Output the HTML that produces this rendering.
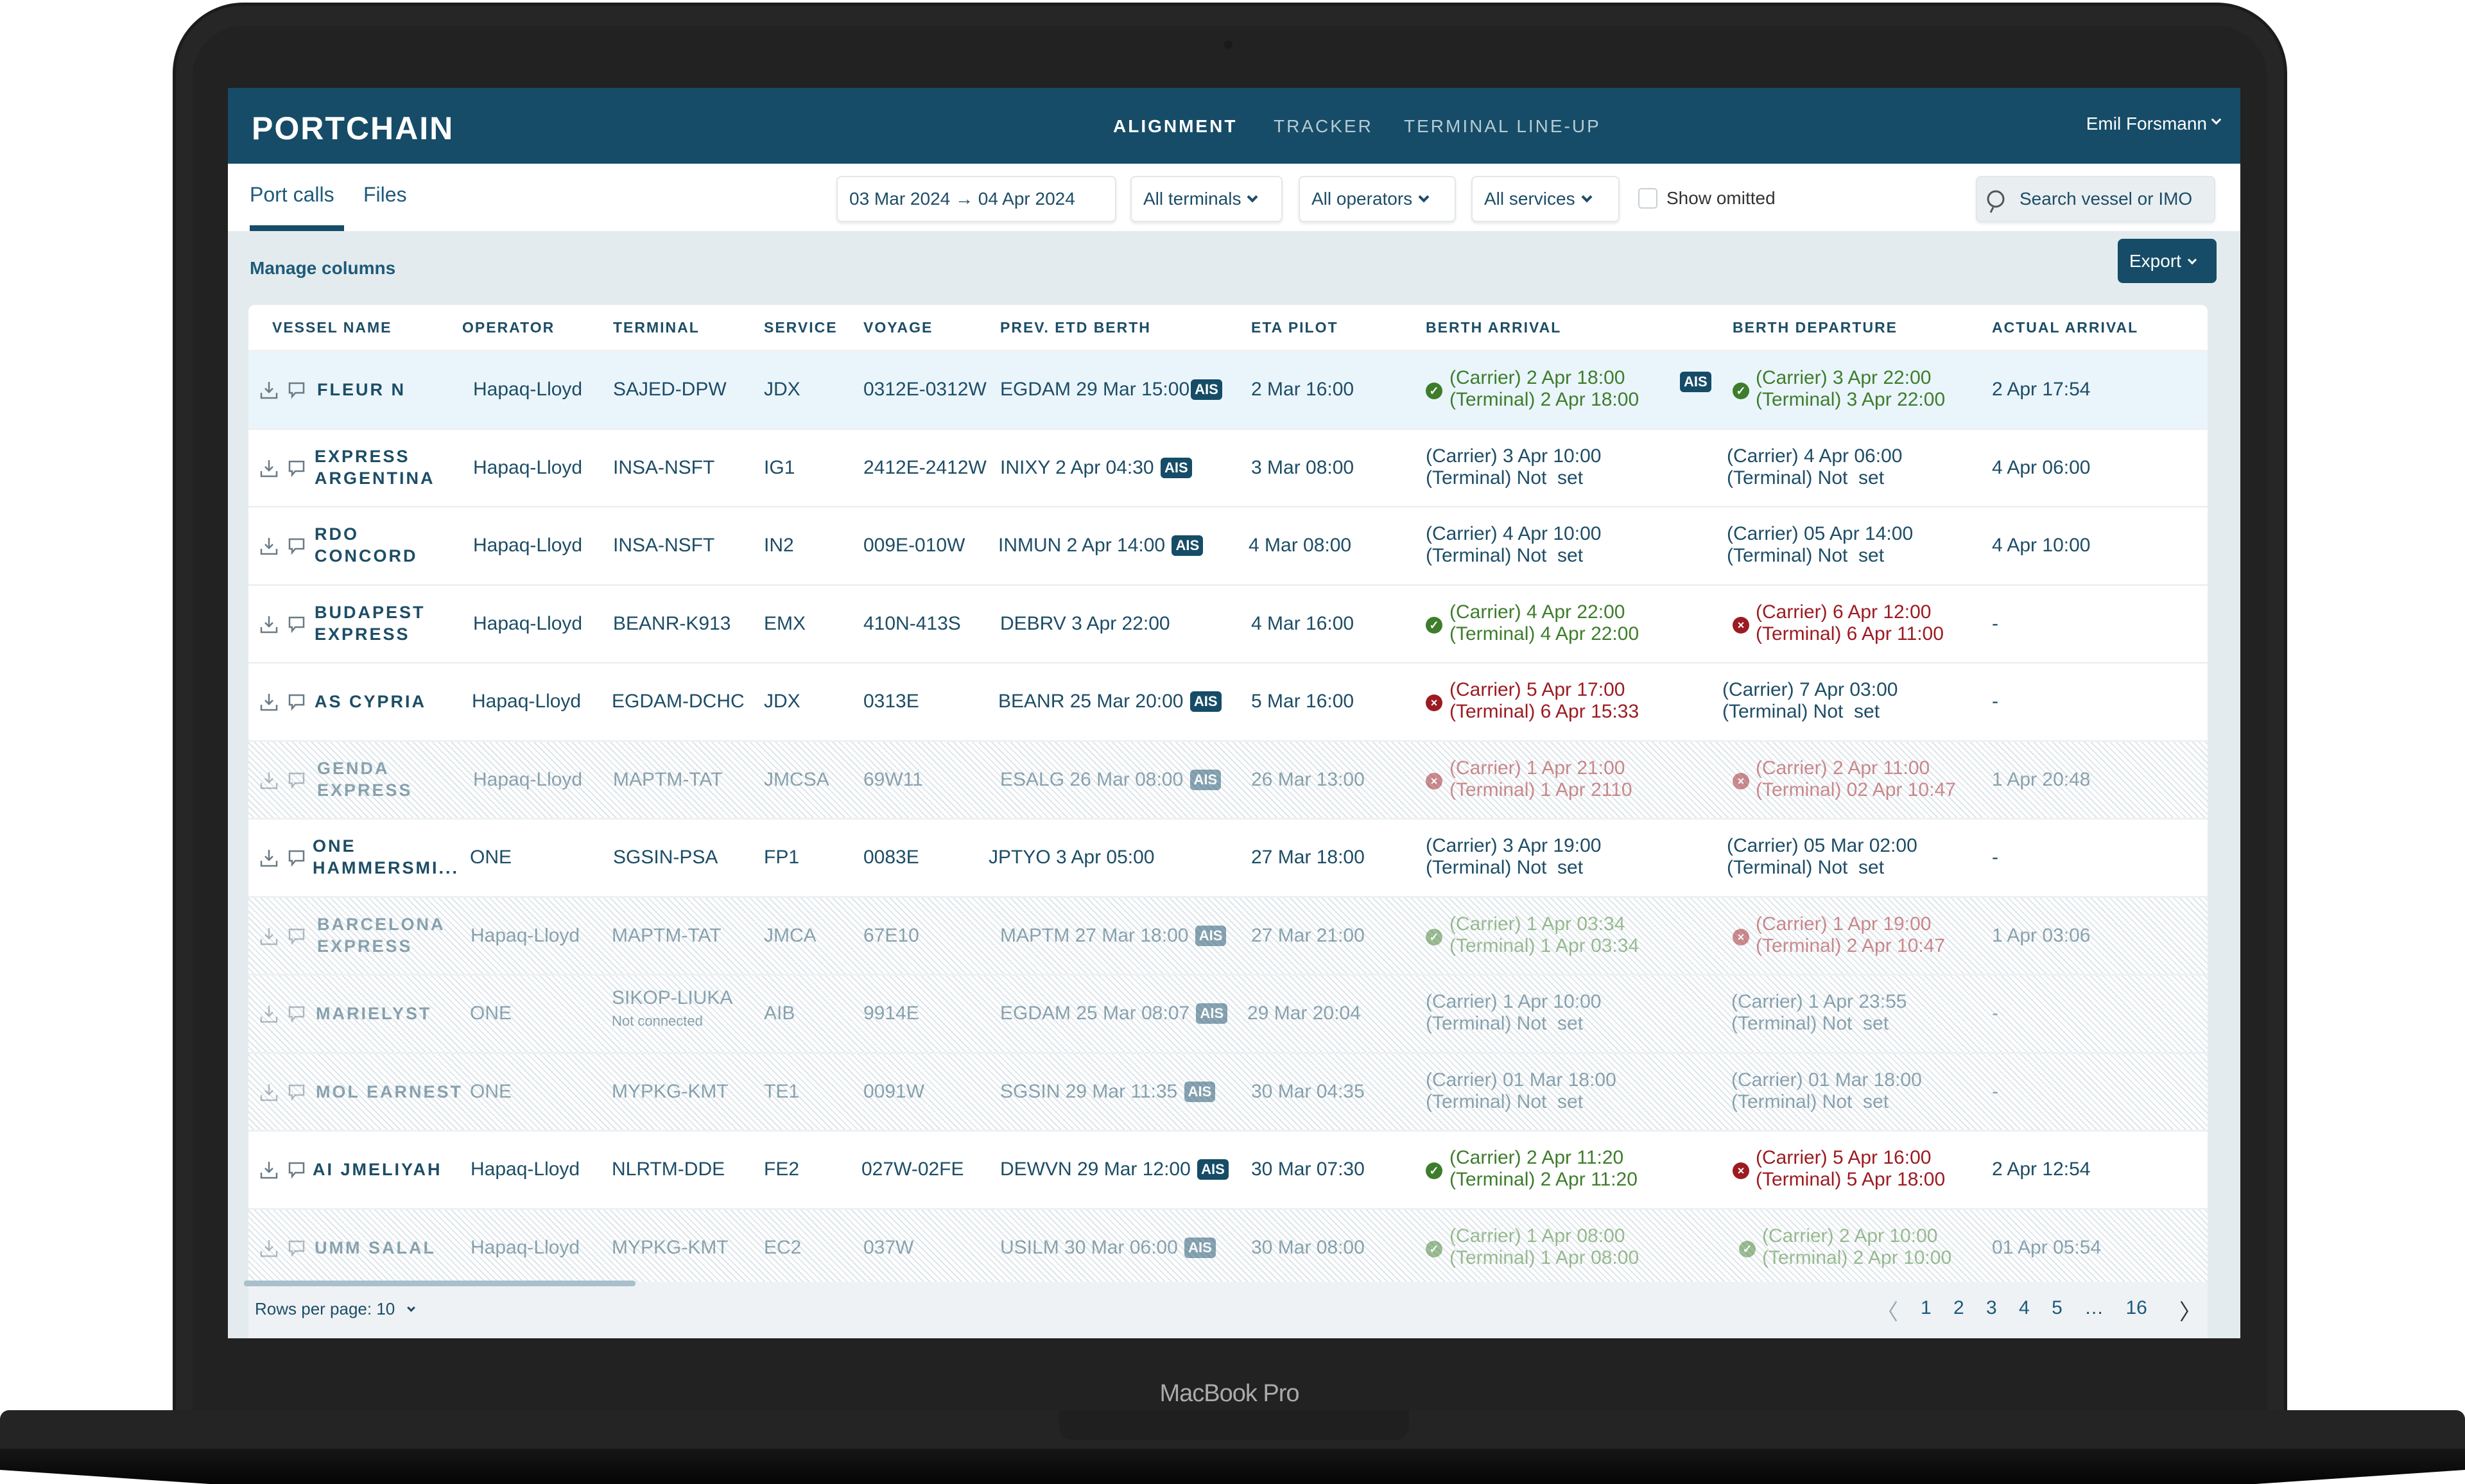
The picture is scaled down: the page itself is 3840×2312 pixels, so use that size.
<!DOCTYPE html>
<html><head><meta charset="utf-8"><style>
*{margin:0;padding:0;box-sizing:border-box}
body{width:3840px;height:2312px;background:#fff;position:relative;overflow:hidden;font-family:"Liberation Sans",sans-serif;color:#1d4d66}
.abs{position:absolute}
#lid{left:269px;top:4px;width:3294px;height:2200px;background:#262626;border-radius:110px 110px 0 0;border:5px solid #1c1c1c}
#bezel{left:300px;top:40px;width:3232px;height:2160px;background:#222;border-radius:80px 80px 0 0}
#screen{left:355px;top:137px;width:3135px;height:1948px;background:#e4ebee;overflow:hidden}
#hdr{left:0;top:0;width:3135px;height:118px;background:#164c67}
.logo{left:37px;top:34px;font-size:50px;color:#fff;letter-spacing:2px;font-weight:bold}
.nav{top:44px;font-size:28px;letter-spacing:3px;color:#b6cbd6}
#fbar{left:0;top:118px;width:3135px;height:105px;background:#fff}
.tab{top:30px;font-size:32px;color:#1d5a7a}
.sel{top:137px;height:72px;border:2px solid #e2e7ea;border-radius:8px;background:#fff;font-size:28px;line-height:68px;padding-left:18px;color:#1d4d66;box-shadow:0 3px 4px rgba(0,0,0,.08)}
.chev{display:inline-block;width:12px;height:12px;border-right:4px solid #1d4d66;border-bottom:4px solid #1d4d66;transform:rotate(45deg);margin-left:12px;position:relative;top:-6px}
#card{left:32px;top:338px;width:3052px;height:1660px;background:#fff;border-radius:10px 10px 0 0;overflow:hidden}
.th{top:0;height:70px;line-height:70px;font-size:23px;font-weight:bold;letter-spacing:2px;color:#1d4d66}
.r{position:absolute;left:0;width:3052px;height:121.5px;border-top:3px solid #eef1f3;background:#fff}
.r.hl{background:#eaf5fb}
.r.f{background:repeating-linear-gradient(45deg,#fff 0 5px,#dde5ea 5px 7px)}
.r.f .in{opacity:.5}
.in{position:absolute;left:0;top:0;width:100%;height:100%}
.c{position:absolute;top:0;line-height:118px;font-size:30px;white-space:nowrap}
.c2{position:absolute;top:24px;line-height:34px;font-size:30px;white-space:nowrap}
.vn{font-weight:bold;letter-spacing:3px;font-size:27px}
.ais{display:inline-block;background:#164c67;color:#fff;font-size:22px;font-weight:bold;height:32px;line-height:32px;padding:0 6px;border-radius:6px;vertical-align:2px;margin-left:2px}
.g{color:#3e7d2c}.rd{color:#9c1b22}
.ok,.no{position:absolute;top:48px;width:26px;height:26px;border-radius:50%;color:#fff;font-size:18px;line-height:26px;text-align:center;font-weight:bold}
.ok{background:#3e7d2c}.no{background:#9c1b22}
.ic{position:absolute;top:45px}
</style></head><body>
<div id="lid" class="abs"></div>
<div id="bezel" class="abs"></div>
<div class="abs" style="left:1907px;top:63px;width:13px;height:13px;border-radius:50%;background:#1a1a1a"></div>
<div id="screen" class="abs">
 <div id="hdr" class="abs">
  <div class="abs logo">PORTCHAIN</div>
  <div class="abs nav" style="left:1379px;color:#fff;font-weight:bold">ALIGNMENT</div>
  <div class="abs nav" style="left:1629px">TRACKER</div>
  <div class="abs nav" style="left:1832px">TERMINAL LINE-UP</div>
  <div class="abs" style="right:52px;top:40px;font-size:28px;color:#fff">Emil Forsmann</div>
  <div class="abs" style="right:32px;top:44px;width:11px;height:11px;border-right:3px solid #fff;border-bottom:3px solid #fff;transform:rotate(45deg)"></div>
 </div>
 <div id="fbar" class="abs">
  <div class="abs tab" style="left:34px">Port calls</div>
  <div class="abs tab" style="left:211px">Files</div>
  <div class="abs" style="left:34px;top:96px;width:147px;height:9px;background:#164c67"></div>
 </div>
 <div class="abs sel" style="left:948px;width:436px">03 Mar 2024 → 04 Apr 2024</div>
 <div class="abs sel" style="left:1406px;width:237px">All terminals<span class="chev"></span></div>
 <div class="abs sel" style="left:1668px;width:245px">All operators<span class="chev"></span></div>
 <div class="abs sel" style="left:1937px;width:231px">All services<span class="chev"></span></div>
 <div class="abs" style="left:2197px;top:156px;width:30px;height:32px;border:2px solid #c8d0d5;border-radius:5px;background:#fff"></div>
 <div class="abs" style="left:2241px;top:156px;font-size:28px;color:#333">Show omitted</div>
 <div class="abs sel" style="left:2723px;width:373px;background:#e9eef1;padding-left:66px">Search vessel or IMO</div>
 <svg class="abs" style="left:2736px;top:156px" width="40" height="40" viewBox="0 0 40 40" fill="none" stroke="#555" stroke-width="3"><circle cx="18" cy="17" r="12"/><path d="M14 30l-4 8"/></svg>
 <div class="abs" style="left:34px;top:265px;font-size:28px;font-weight:bold;color:#1d5a7a">Manage columns</div>
 <div class="abs" style="left:2944px;top:235px;width:154px;height:69px;background:#164c67;border-radius:8px;color:#fff;font-size:28px;line-height:69px;padding-left:18px">Export<span class="chev" style="border-color:#fff;width:10px;height:10px;border-width:0 3px 3px 0"></span></div>
 <div id="card" class="abs">
  <div class="th abs" style="left:37px">VESSEL NAME</div>
  <div class="th abs" style="left:333px">OPERATOR</div>
  <div class="th abs" style="left:568px">TERMINAL</div>
  <div class="th abs" style="left:803px">SERVICE</div>
  <div class="th abs" style="left:958px">VOYAGE</div>
  <div class="th abs" style="left:1171px">PREV. ETD BERTH</div>
  <div class="th abs" style="left:1562px">ETA PILOT</div>
  <div class="th abs" style="left:1834px">BERTH ARRIVAL</div>
  <div class="th abs" style="left:2312px">BERTH DEPARTURE</div>
  <div class="th abs" style="left:2716px">ACTUAL ARRIVAL</div>

  <div class="r hl" style="top:70px"><div class="in">
   <svg class="ic" style="left:18px" width="28" height="30" viewBox="0 0 28 30" fill="none" stroke="#6a7a85" stroke-width="2.5"><path d="M14 2v16M8 12l6 6 6-6M2 19v8h24v-8"/></svg>
   <svg class="ic" style="left:61px" width="28" height="30" viewBox="0 0 28 30" fill="none" stroke="#6a7a85" stroke-width="2.5"><path d="M3 4h22v15H12l-5 6v-6H3z"/></svg>
   <div class="c vn" style="left:107px">FLEUR N</div>
   <div class="c" style="left:350px">Hapaq-Lloyd</div>
   <div class="c" style="left:568px">SAJED-DPW</div>
   <div class="c" style="left:803px">JDX</div>
   <div class="c" style="left:958px">0312E-0312W</div>
   <div class="c" style="left:1171px">EGDAM 29 Mar 15:00<span class="ais">AIS</span></div>
   <div class="c" style="left:1562px">2 Mar 16:00</div>
   <div class="ok" style="left:1834px">✓</div>
   <div class="c2 g" style="left:1871px">(Carrier) 2 Apr 18:00<br>(Terminal) 2 Apr 18:00</div>
   <div class="c" style="left:2228px;top:-12px"><span class="ais">AIS</span></div>
   <div class="ok" style="left:2312px">✓</div>
   <div class="c2 g" style="left:2348px">(Carrier) 3 Apr 22:00<br>(Terminal) 3 Apr 22:00</div>
   <div class="c" style="left:2716px">2 Apr 17:54</div>
  </div></div>

  <div class="r" style="top:191.5px"><div class="in">
   <svg class="ic" style="left:18px" width="28" height="30" viewBox="0 0 28 30" fill="none" stroke="#6a7a85" stroke-width="2.5"><path d="M14 2v16M8 12l6 6 6-6M2 19v8h24v-8"/></svg>
   <svg class="ic" style="left:61px" width="28" height="30" viewBox="0 0 28 30" fill="none" stroke="#6a7a85" stroke-width="2.5"><path d="M3 4h22v15H12l-5 6v-6H3z"/></svg>
   <div class="c2 vn" style="left:103px">EXPRESS<br>ARGENTINA</div>
   <div class="c" style="left:350px">Hapaq-Lloyd</div>
   <div class="c" style="left:568px">INSA-NSFT</div>
   <div class="c" style="left:803px">IG1</div>
   <div class="c" style="left:958px">2412E-2412W</div>
   <div class="c" style="left:1171px">INIXY 2 Apr 04:30 <span class="ais">AIS</span></div>
   <div class="c" style="left:1562px">3 Mar 08:00</div>
   <div class="c2" style="left:1834px">(Carrier) 3 Apr 10:00<br>(Terminal) Not&nbsp; set</div>
   <div class="c2" style="left:2303px">(Carrier) 4 Apr 06:00<br>(Terminal) Not&nbsp; set</div>
   <div class="c" style="left:2716px">4 Apr 06:00</div>
  </div></div>

  <div class="r" style="top:313px"><div class="in">
   <svg class="ic" style="left:18px" width="28" height="30" viewBox="0 0 28 30" fill="none" stroke="#6a7a85" stroke-width="2.5"><path d="M14 2v16M8 12l6 6 6-6M2 19v8h24v-8"/></svg>
   <svg class="ic" style="left:61px" width="28" height="30" viewBox="0 0 28 30" fill="none" stroke="#6a7a85" stroke-width="2.5"><path d="M3 4h22v15H12l-5 6v-6H3z"/></svg>
   <div class="c2 vn" style="left:103px">RDO<br>CONCORD</div>
   <div class="c" style="left:350px">Hapaq-Lloyd</div>
   <div class="c" style="left:568px">INSA-NSFT</div>
   <div class="c" style="left:803px">IN2</div>
   <div class="c" style="left:958px">009E-010W</div>
   <div class="c" style="left:1168px">INMUN 2 Apr 14:00 <span class="ais">AIS</span></div>
   <div class="c" style="left:1558px">4 Mar 08:00</div>
   <div class="c2" style="left:1834px">(Carrier) 4 Apr 10:00<br>(Terminal) Not&nbsp; set</div>
   <div class="c2" style="left:2303px">(Carrier) 05 Apr 14:00<br>(Terminal) Not&nbsp; set</div>
   <div class="c" style="left:2716px">4 Apr 10:00</div>
  </div></div>

  <div class="r" style="top:434.5px"><div class="in">
   <svg class="ic" style="left:18px" width="28" height="30" viewBox="0 0 28 30" fill="none" stroke="#6a7a85" stroke-width="2.5"><path d="M14 2v16M8 12l6 6 6-6M2 19v8h24v-8"/></svg>
   <svg class="ic" style="left:61px" width="28" height="30" viewBox="0 0 28 30" fill="none" stroke="#6a7a85" stroke-width="2.5"><path d="M3 4h22v15H12l-5 6v-6H3z"/></svg>
   <div class="c2 vn" style="left:103px">BUDAPEST<br>EXPRESS</div>
   <div class="c" style="left:350px">Hapaq-Lloyd</div>
   <div class="c" style="left:568px">BEANR-K913</div>
   <div class="c" style="left:803px">EMX</div>
   <div class="c" style="left:958px">410N-413S</div>
   <div class="c" style="left:1171px">DEBRV 3 Apr 22:00</div>
   <div class="c" style="left:1562px">4 Mar 16:00</div>
   <div class="ok" style="left:1834px">✓</div>
   <div class="c2 g" style="left:1871px">(Carrier) 4 Apr 22:00<br>(Terminal) 4 Apr 22:00</div>
   <div class="no" style="left:2312px">×</div>
   <div class="c2 rd" style="left:2348px">(Carrier) 6 Apr 12:00<br>(Terminal) 6 Apr 11:00</div>
   <div class="c" style="left:2716px">-</div>
  </div></div>

  <div class="r" style="top:556px"><div class="in">
   <svg class="ic" style="left:18px" width="28" height="30" viewBox="0 0 28 30" fill="none" stroke="#6a7a85" stroke-width="2.5"><path d="M14 2v16M8 12l6 6 6-6M2 19v8h24v-8"/></svg>
   <svg class="ic" style="left:61px" width="28" height="30" viewBox="0 0 28 30" fill="none" stroke="#6a7a85" stroke-width="2.5"><path d="M3 4h22v15H12l-5 6v-6H3z"/></svg>
   <div class="c vn" style="left:103px">AS CYPRIA</div>
   <div class="c" style="left:348px">Hapaq-Lloyd</div>
   <div class="c" style="left:566px">EGDAM-DCHC</div>
   <div class="c" style="left:803px">JDX</div>
   <div class="c" style="left:958px">0313E</div>
   <div class="c" style="left:1168px">BEANR 25 Mar 20:00 <span class="ais">AIS</span></div>
   <div class="c" style="left:1562px">5 Mar 16:00</div>
   <div class="no" style="left:1834px">×</div>
   <div class="c2 rd" style="left:1871px">(Carrier) 5 Apr 17:00<br>(Terminal) 6 Apr 15:33</div>
   <div class="c2" style="left:2296px">(Carrier) 7 Apr 03:00<br>(Terminal) Not&nbsp; set</div>
   <div class="c" style="left:2716px">-</div>
  </div></div>

  <div class="r f" style="top:677.5px"><div class="in">
   <svg class="ic" style="left:18px" width="28" height="30" viewBox="0 0 28 30" fill="none" stroke="#6a7a85" stroke-width="2.5"><path d="M14 2v16M8 12l6 6 6-6M2 19v8h24v-8"/></svg>
   <svg class="ic" style="left:61px" width="28" height="30" viewBox="0 0 28 30" fill="none" stroke="#6a7a85" stroke-width="2.5"><path d="M3 4h22v15H12l-5 6v-6H3z"/></svg>
   <div class="c2 vn" style="left:107px">GENDA<br>EXPRESS</div>
   <div class="c" style="left:350px">Hapaq-Lloyd</div>
   <div class="c" style="left:568px">MAPTM-TAT</div>
   <div class="c" style="left:803px">JMCSA</div>
   <div class="c" style="left:958px">69W11</div>
   <div class="c" style="left:1171px">ESALG 26 Mar 08:00 <span class="ais">AIS</span></div>
   <div class="c" style="left:1562px">26 Mar 13:00</div>
   <div class="no" style="left:1834px">×</div>
   <div class="c2 rd" style="left:1871px">(Carrier) 1 Apr 21:00<br>(Terminal) 1 Apr 2110</div>
   <div class="no" style="left:2312px">×</div>
   <div class="c2 rd" style="left:2348px">(Carrier) 2 Apr 11:00<br>(Terminal) 02 Apr 10:47</div>
   <div class="c" style="left:2716px">1 Apr 20:48</div>
  </div></div>

  <div class="r" style="top:799px"><div class="in">
   <svg class="ic" style="left:18px" width="28" height="30" viewBox="0 0 28 30" fill="none" stroke="#6a7a85" stroke-width="2.5"><path d="M14 2v16M8 12l6 6 6-6M2 19v8h24v-8"/></svg>
   <svg class="ic" style="left:61px" width="28" height="30" viewBox="0 0 28 30" fill="none" stroke="#6a7a85" stroke-width="2.5"><path d="M3 4h22v15H12l-5 6v-6H3z"/></svg>
   <div class="c2 vn" style="left:100px">ONE<br>HAMMERSMI...</div>
   <div class="c" style="left:345px">ONE</div>
   <div class="c" style="left:568px">SGSIN-PSA</div>
   <div class="c" style="left:803px">FP1</div>
   <div class="c" style="left:958px">0083E</div>
   <div class="c" style="left:1153px">JPTYO 3 Apr 05:00</div>
   <div class="c" style="left:1562px">27 Mar 18:00</div>
   <div class="c2" style="left:1834px">(Carrier) 3 Apr 19:00<br>(Terminal) Not&nbsp; set</div>
   <div class="c2" style="left:2303px">(Carrier) 05 Mar 02:00<br>(Terminal) Not&nbsp; set</div>
   <div class="c" style="left:2716px">-</div>
  </div></div>

  <div class="r f" style="top:920.5px"><div class="in">
   <svg class="ic" style="left:18px" width="28" height="30" viewBox="0 0 28 30" fill="none" stroke="#6a7a85" stroke-width="2.5"><path d="M14 2v16M8 12l6 6 6-6M2 19v8h24v-8"/></svg>
   <svg class="ic" style="left:61px" width="28" height="30" viewBox="0 0 28 30" fill="none" stroke="#6a7a85" stroke-width="2.5"><path d="M3 4h22v15H12l-5 6v-6H3z"/></svg>
   <div class="c2 vn" style="left:107px">BARCELONA<br>EXPRESS</div>
   <div class="c" style="left:346px">Hapaq-Lloyd</div>
   <div class="c" style="left:566px">MAPTM-TAT</div>
   <div class="c" style="left:803px">JMCA</div>
   <div class="c" style="left:958px">67E10</div>
   <div class="c" style="left:1171px">MAPTM 27 Mar 18:00 <span class="ais">AIS</span></div>
   <div class="c" style="left:1562px">27 Mar 21:00</div>
   <div class="ok" style="left:1834px">✓</div>
   <div class="c2 g" style="left:1871px">(Carrier) 1 Apr 03:34<br>(Terminal) 1 Apr 03:34</div>
   <div class="no" style="left:2312px">×</div>
   <div class="c2 rd" style="left:2348px">(Carrier) 1 Apr 19:00<br>(Terminal) 2 Apr 10:47</div>
   <div class="c" style="left:2716px">1 Apr 03:06</div>
  </div></div>

  <div class="r f" style="top:1042px"><div class="in">
   <svg class="ic" style="left:18px" width="28" height="30" viewBox="0 0 28 30" fill="none" stroke="#6a7a85" stroke-width="2.5"><path d="M14 2v16M8 12l6 6 6-6M2 19v8h24v-8"/></svg>
   <svg class="ic" style="left:61px" width="28" height="30" viewBox="0 0 28 30" fill="none" stroke="#6a7a85" stroke-width="2.5"><path d="M3 4h22v15H12l-5 6v-6H3z"/></svg>
   <div class="c vn" style="left:105px">MARIELYST</div>
   <div class="c" style="left:345px">ONE</div>
   <div class="c2" style="left:566px;top:18px">SIKOP-LIUKA<br><span style="font-size:22px">Not connected</span></div>
   <div class="c" style="left:803px">AIB</div>
   <div class="c" style="left:958px">9914E</div>
   <div class="c" style="left:1171px">EGDAM 25 Mar 08:07 <span class="ais">AIS</span></div>
   <div class="c" style="left:1556px">29 Mar 20:04</div>
   <div class="c2" style="left:1834px">(Carrier) 1 Apr 10:00<br>(Terminal) Not&nbsp; set</div>
   <div class="c2" style="left:2310px">(Carrier) 1 Apr 23:55<br>(Terminal) Not&nbsp; set</div>
   <div class="c" style="left:2716px">-</div>
  </div></div>

  <div class="r f" style="top:1163.5px"><div class="in">
   <svg class="ic" style="left:18px" width="28" height="30" viewBox="0 0 28 30" fill="none" stroke="#6a7a85" stroke-width="2.5"><path d="M14 2v16M8 12l6 6 6-6M2 19v8h24v-8"/></svg>
   <svg class="ic" style="left:61px" width="28" height="30" viewBox="0 0 28 30" fill="none" stroke="#6a7a85" stroke-width="2.5"><path d="M3 4h22v15H12l-5 6v-6H3z"/></svg>
   <div class="c vn" style="left:105px">MOL EARNEST</div>
   <div class="c" style="left:345px">ONE</div>
   <div class="c" style="left:566px">MYPKG-KMT</div>
   <div class="c" style="left:803px">TE1</div>
   <div class="c" style="left:958px">0091W</div>
   <div class="c" style="left:1171px">SGSIN 29 Mar 11:35 <span class="ais">AIS</span></div>
   <div class="c" style="left:1562px">30 Mar 04:35</div>
   <div class="c2" style="left:1834px">(Carrier) 01 Mar 18:00<br>(Terminal) Not&nbsp; set</div>
   <div class="c2" style="left:2310px">(Carrier) 01 Mar 18:00<br>(Terminal) Not&nbsp; set</div>
   <div class="c" style="left:2716px">-</div>
  </div></div>

  <div class="r" style="top:1285px"><div class="in">
   <svg class="ic" style="left:18px" width="28" height="30" viewBox="0 0 28 30" fill="none" stroke="#6a7a85" stroke-width="2.5"><path d="M14 2v16M8 12l6 6 6-6M2 19v8h24v-8"/></svg>
   <svg class="ic" style="left:61px" width="28" height="30" viewBox="0 0 28 30" fill="none" stroke="#6a7a85" stroke-width="2.5"><path d="M3 4h22v15H12l-5 6v-6H3z"/></svg>
   <div class="c vn" style="left:100px">AI JMELIYAH</div>
   <div class="c" style="left:346px">Hapaq-Lloyd</div>
   <div class="c" style="left:566px">NLRTM-DDE</div>
   <div class="c" style="left:803px">FE2</div>
   <div class="c" style="left:955px">027W-02FE</div>
   <div class="c" style="left:1171px">DEWVN 29 Mar 12:00 <span class="ais">AIS</span></div>
   <div class="c" style="left:1562px">30 Mar 07:30</div>
   <div class="ok" style="left:1834px">✓</div>
   <div class="c2 g" style="left:1871px">(Carrier) 2 Apr 11:20<br>(Terminal) 2 Apr 11:20</div>
   <div class="no" style="left:2312px">×</div>
   <div class="c2 rd" style="left:2348px">(Carrier) 5 Apr 16:00<br>(Terminal) 5 Apr 18:00</div>
   <div class="c" style="left:2716px">2 Apr 12:54</div>
  </div></div>

  <div class="r f" style="top:1406.5px"><div class="in">
   <svg class="ic" style="left:18px" width="28" height="30" viewBox="0 0 28 30" fill="none" stroke="#6a7a85" stroke-width="2.5"><path d="M14 2v16M8 12l6 6 6-6M2 19v8h24v-8"/></svg>
   <svg class="ic" style="left:61px" width="28" height="30" viewBox="0 0 28 30" fill="none" stroke="#6a7a85" stroke-width="2.5"><path d="M3 4h22v15H12l-5 6v-6H3z"/></svg>
   <div class="c vn" style="left:103px">UMM SALAL</div>
   <div class="c" style="left:346px">Hapaq-Lloyd</div>
   <div class="c" style="left:566px">MYPKG-KMT</div>
   <div class="c" style="left:803px">EC2</div>
   <div class="c" style="left:958px">037W</div>
   <div class="c" style="left:1171px">USILM 30 Mar 06:00 <span class="ais">AIS</span></div>
   <div class="c" style="left:1562px">30 Mar 08:00</div>
   <div class="ok" style="left:1834px">✓</div>
   <div class="c2 g" style="left:1871px">(Carrier) 1 Apr 08:00<br>(Terminal) 1 Apr 08:00</div>
   <div class="ok" style="left:2322px">✓</div>
   <div class="c2 g" style="left:2358px">(Carrier) 2 Apr 10:00<br>(Terminal) 2 Apr 10:00</div>
   <div class="c" style="left:2716px">01 Apr 05:54</div>
  </div></div>
 </div>
 <div class="abs" style="left:32px;top:1860px;width:3052px;height:90px;background:#eef2f5"></div>
 <div class="abs" style="left:25px;top:1858px;width:610px;height:9px;background:#a9c0cc;border-radius:4px"></div>
 <div class="abs" style="left:42px;top:1887px;font-size:26px;color:#1d4d66">Rows per page: 10 <span class="chev" style="width:9px;height:9px;border-width:0 3px 3px 0;margin-left:14px"></span></div>
 <div class="abs" style="left:2568px;top:1880px;font-size:34px;color:#9aa8b0">〈</div>
 <div class="abs" style="left:2637px;top:1884px;font-size:30px;color:#1d5a7a;word-spacing:26px;white-space:nowrap">1 2 3 4 5 <span style="color:#1d4d66">…</span> 16</div>
 <div class="abs" style="left:3040px;top:1880px;font-size:34px;color:#333">〉</div>
</div>
<div class="abs" style="left:0;top:2197px;width:3840px;height:60px;background:#242424;border-radius:14px 14px 0 0"></div>
<div class="abs" style="left:0;top:2257px;width:3840px;height:55px;background:linear-gradient(#161616,#050505);clip-path:polygon(0 0,100% 0,100% 60%,91.5% 100%,8.5% 100%,0 60%)"></div>
<div class="abs" style="left:1650px;top:2197px;width:545px;height:46px;background:#1f1f1f;border-radius:0 0 20px 20px"></div>
<div class="abs" style="left:0;top:2150px;width:3830px;text-align:center;font-size:38px;color:#aaa;letter-spacing:-1px">MacBook Pro</div>
</body></html>
